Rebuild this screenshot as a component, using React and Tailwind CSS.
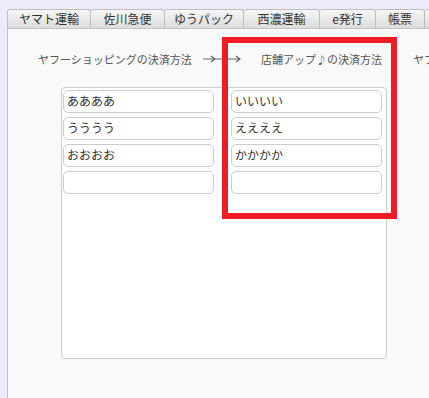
import React from 'react';

const tabs = [
  { label: 'ヤマト運輸', w: 'w-[84px]' },
  { label: '佐川急便', w: 'w-[74px]' },
  { label: 'ゆうパック', w: 'w-[79px]' },
  { label: '西濃運輸', w: 'w-[76px]' },
  { label: 'e発行', w: 'w-[56px]' },
  { label: '帳票', w: 'w-[49px]' },
  { label: '設定', w: 'w-[60px]' },
];

const rows = [
  ['ああああ', 'いいいい'],
  ['うううう', 'ええええ'],
  ['おおおお', 'かかかか'],
  ['', ''],
];

const Field = ({ value }) => (
  <div className="w-[151px] h-[23px] bg-white border border-[#cccccc] rounded-[5px] px-[3px] text-[12px] leading-[20px] text-[#333] whitespace-nowrap overflow-hidden">
    {value}
  </div>
);

export default function App() {
  return (
    <div
      className="w-[429px] h-[398px] bg-[#ebebfb] overflow-hidden relative"
      style={{ fontFamily: '"Noto Sans CJK JP", "Noto Sans", sans-serif' }}
    >
      {/* tabs */}
      <div className="flex pl-[7px] pt-[9px] h-[28px] whitespace-nowrap">
        {tabs.map((t, i) => (
          <div
            key={i}
            className={`${t.w} shrink-0 h-[19px] flex items-center justify-center text-[12px] text-[#333] bg-gradient-to-b from-[#f6f6f6] to-[#dcdcdc] border-t border-r border-[#bdbdbd] rounded-t-[3px] ${i === 0 ? 'border-l' : ''}`}
          >
            {t.label}
          </div>
        ))}
      </div>

      {/* panel */}
      <div className="ml-[7px] h-[370px] bg-[#f9f9f9] border-l border-t border-[#c4c4c4]">
        <div className="flex items-center h-[14px] mt-[23px] text-[11px] text-[#555] whitespace-nowrap">
          <div className="w-[195px] pl-[30px] shrink-0">ヤフーショッピングの決済方法</div>
          <div className="w-[58px] shrink-0 flex items-center">
            <svg width="38" height="8" viewBox="0 0 38 8">
              <path d="M0 4H37M8 1l4 3-4 3M33 1l4 3-4 3" stroke="#666" strokeWidth="1.2" fill="none" />
            </svg>
          </div>
          <div className="w-[152px] shrink-0">店舗アップ♪の決済方法</div>
          <div className="shrink-0">ヤフーショッピングの決済方法</div>
        </div>

        <div className="ml-[53px] mt-[21px] w-[326px] h-[272px] bg-white border border-[#cccccc] rounded-[4px] pl-[1px] pt-[2px]">
          <div className="flex flex-col gap-[4px]">
            {rows.map((r, i) => (
              <div key={i} className="flex gap-[17px]">
                <Field value={r[0]} />
                <Field value={r[1]} />
              </div>
            ))}
          </div>
        </div>
      </div>

      {/* red annotation box */}
      <div className="absolute left-[222px] top-[37px] w-[175px] h-[182px] border-[6px] border-[#ee1c25]" />
    </div>
  );
}
